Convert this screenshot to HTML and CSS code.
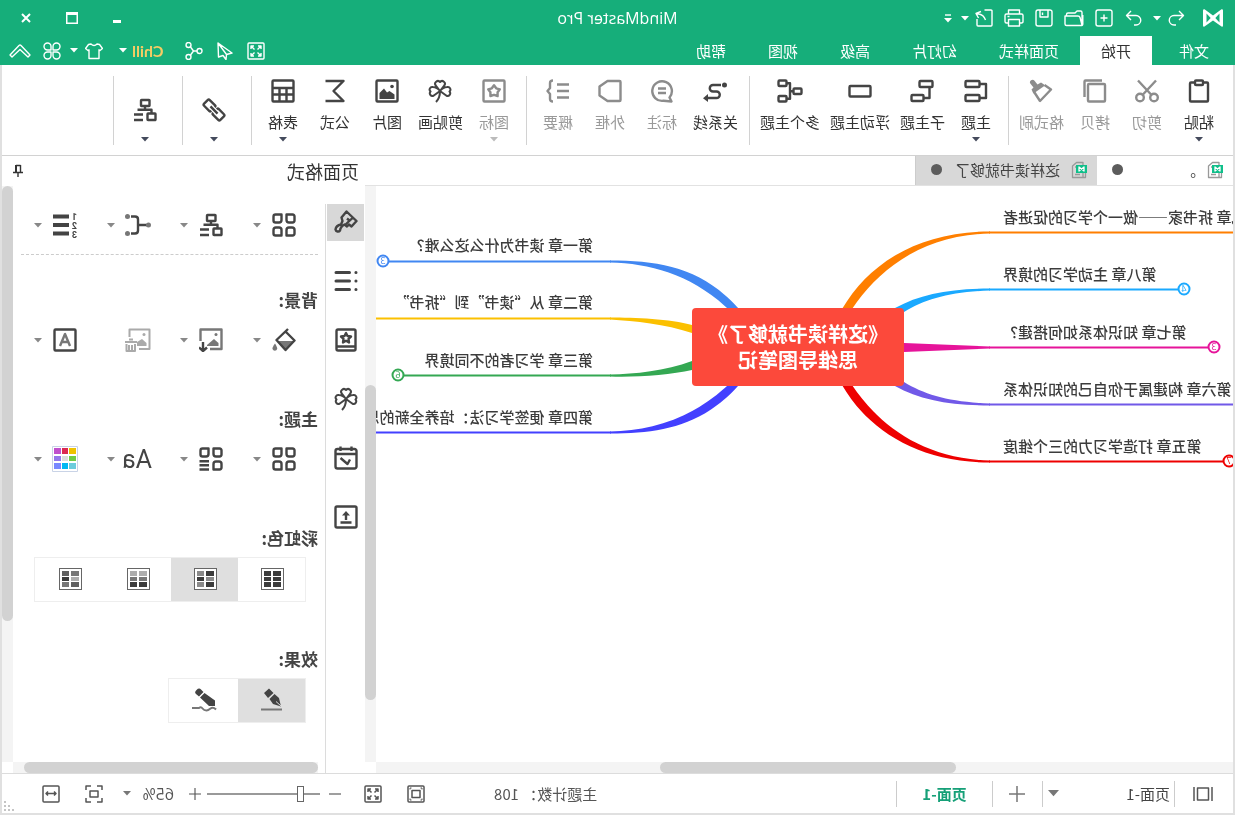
FILE: index.html
```html
<!DOCTYPE html>
<html lang="zh-CN">
<head>
<meta charset="utf-8">
<title>MindMaster Pro</title>
<link rel="stylesheet" href="styles.css">
</head>
<body>
<svg class="defs" aria-hidden="true">
  <symbol id="caret" viewBox="0 0 8 5"><path class="fill" d="M0 0h8L4 4.5z"/></symbol>
  <symbol id="logo" viewBox="0 0 20 18"><path class="fill" d="M0 1.500Q0 0 1.500.3L10 6.500 18.500.3Q20 0 20 1.500V16.500Q20 18 18.500 17.600L10 11.400 1.500 17.600Q0 18 0 16.500zM3.500 4.500V13.500L7.700 9zM16.500 4.500L12.300 9 16.500 13.500z" fill-rule="evenodd"/></symbol>
  <symbol id="undo" viewBox="0 0 18 18"><path d="M6 2L1.500 6.500 6 11M2 6.500H11a4.500 4.500 0 0 1 0 9.500H9"/></symbol>
  <symbol id="redo" viewBox="0 0 18 18"><path d="M12 2L16.500 6.500 12 11M16 6.500H7a4.500 4.500 0 0 0 0 9.500H9"/></symbol>
  <symbol id="new" viewBox="0 0 18 18"><rect x="1" y="1" width="16" height="16" rx="2"/><path d="M9 5.500v7M5.500 9h7"/></symbol>
  <symbol id="open" viewBox="0 0 20 18"><path d="M2 16V3.500Q2 2 3.500 2H7l2 2H16Q17.500 4 17.500 5.500V7M2 16L4 8.500Q4.500 7 6 7H19V15Q19 16.500 17.500 16.500H3Q1.200 16.500 1.200 15V6"/></symbol>
  <symbol id="save" viewBox="0 0 18 18"><rect x="1" y="1" width="16" height="16" rx="2"/><path d="M5 1v7h8V1M10.500 3.500v2.500"/></symbol>
  <symbol id="print" viewBox="0 0 20 18"><path d="M4.500 5V1H15.500V5M4.500 14H2.500Q1 14 1 12.500V6.500Q1 5 2.500 5H17.500Q19 5 19 6.500V12.500Q19 14 17.500 14H15.500M4.500 10.500H15.500V17H4.500zM14.500 7.500h2"/></symbol>
  <symbol id="export" viewBox="0 0 18 18"><path d="M8.500 1H2Q1 1 1 2V16Q1 17 2 17H15Q16 17 16 16V10M12 2.500L17 4.500 14.500 9M16.500 4.800C12 4.800 9 7 7.500 11"/></symbol>
  <symbol id="more" viewBox="0 0 8 9"><path d="M1 1h6"/><path class="fill" d="M0 4h8L4 8.500z"/></symbol>
  <symbol id="min" viewBox="0 0 8 12"><path class="fill" d="M0 8h8v3H0z"/></symbol>
  <symbol id="max" viewBox="0 0 12 12"><path class="fill" d="M0 0h12v12H0zM1.500 3v7.500h9V3z" fill-rule="evenodd"/></symbol>
  <symbol id="close" viewBox="0 0 10 10"><path d="M1 1l8 8M9 1L1 9"/></symbol>
  <symbol id="full" viewBox="0 0 18 18"><rect x="1" y="1" width="16" height="16" rx="1"/><path d="M4 7V4h3M4 4l3.500 3.500M14 7V4h-3M14 4l-3.500 3.500M4 11v3h3M4 14l3.500-3.500M14 11v3h-3M14 14l-3.500-3.500"/></symbol>
  <symbol id="plane" viewBox="0 0 18 18"><path d="M16 1L2 11 7.500 12.500 8 17.500 11 13.500 15.500 15zM16 1L7.500 12.500"/></symbol>
  <symbol id="share" viewBox="0 0 18 18"><circle cx="3.500" cy="9" r="2.500"/><circle cx="14.500" cy="3" r="2.500"/><circle cx="14.500" cy="15" r="2.500"/><path d="M6 9h3.500M9.500 9L12.500 5M9.500 9l3 4"/></symbol>
  <symbol id="shirt" viewBox="0 0 18 18"><path d="M6 2Q9 5 12 2L14.500 2.500 17.500 6.500 15 8.500 14 7.800V16.500H4V7.800L3 8.500.5 6.500 3.500 2.500z"/></symbol>
  <symbol id="petals" viewBox="0 0 18 18"><path d="M8 8H4.500A3.500 3.500 0 1 1 8 4.500zM10 8V4.500A3.500 3.500 0 1 1 13.500 8zM8 10V13.500A3.500 3.500 0 1 1 4.500 10zM10 10H13.500A3.500 3.500 0 1 1 10 13.500z"/></symbol>
  <symbol id="up" viewBox="0 0 22 16"><path d="M1 12L10 2.500Q11 1.500 12 2.500L21 12 19 14 11 6.500 3 14z"/></symbol>

  <symbol id="paste" viewBox="0 0 24 24"><path d="M8 3.500H4Q3 3.500 3 4.500V21.500Q3 22.500 4 22.500H20Q21 22.500 21 21.500V4.500Q21 3.500 20 3.500H16"/><rect x="8" y="1.500" width="8" height="4.500" rx="1"/></symbol>
  <symbol id="cut" viewBox="0 0 24 24"><path d="M3 1.500L17 16.500M21 1.500L7 16.500"/><circle cx="5" cy="18.500" r="3.800"/><circle cx="19" cy="18.500" r="3.800"/></symbol>
  <symbol id="copy" viewBox="0 0 24 24"><rect x="2" y="5" width="17" height="17.500" rx="1"/><path d="M5 1.500H21.500Q22.500 1.500 22.500 2.500V18"/></symbol>
  <symbol id="brush" viewBox="0 0 24 24"><path d="M8.500 6L2 10.500 13 22 19.500 12"/><path class="fill" d="M9 5.500L12 3.500 15.500 5.500 18.500 1.800a2.400 2.400 0 0 1 4 3L19.500 8.500 21.500 10.500 19.500 14.500 8 6.500z"/></symbol>
  <symbol id="topic" viewBox="0 0 24 24"><rect x="8.500" y="2" width="14" height="6" rx="1"/><rect x="8.500" y="16" width="14" height="6" rx="1"/><path d="M8.500 5H2V19H8.500"/></symbol>
  <symbol id="subtopic" viewBox="0 0 24 24"><rect x="1.500" y="2" width="13" height="6" rx="1"/><rect x="10.500" y="16" width="12" height="6" rx="1"/><path d="M4.500 8V19H10.500"/></symbol>
  <symbol id="float" viewBox="0 0 24 24"><rect x="1.500" y="7" width="21" height="10.500" rx="1"/></symbol>
  <symbol id="multi" viewBox="0 0 26 24"><rect x="16.500" y="1.500" width="8" height="5.500" rx="1"/><rect x="16.500" y="17" width="8" height="5.500" rx="1"/><rect x="1.500" y="9.500" width="8" height="5.500" rx="1"/><path d="M9.500 12.200H13M16.500 4.200H13V19.800H16.500"/></symbol>
  <symbol id="relation" viewBox="0 0 24 24"><circle class="fill" cx="2.500" cy="6" r="2.500"/><path d="M6 6H14a3.200 3.200 0 0 1 0 6.500H10.500a3.200 3.200 0 0 0 0 6.500H20"/><path class="fill" d="M19 15L24 19.200 19 23z"/></symbol>
  <symbol id="callout" viewBox="0 0 24 24"><path d="M2.500 22.500L4.500 18.500A9.800 9.800 0 1 1 10.500 21.800zM8 9.500H16M8 14H16"/></symbol>
  <symbol id="outline" viewBox="0 0 24 24"><path d="M2.500 2H14.500L22.500 7.500V16.500L14.500 22H2.500Q1.500 22 1.500 21V3Q1.500 2 2.500 2z"/></symbol>
  <symbol id="summary" viewBox="0 0 24 24"><path d="M1 5.500H13M1 12H13M1 18.500H13M17 1.500Q20 1.500 20 4V9L22.500 12 20 15V20Q20 22.500 17 22.500"/></symbol>
  <symbol id="mark" viewBox="0 0 24 24"><rect x="1.500" y="1.500" width="21" height="21" rx="1"/><path d="M12 6.200L14.200 9.300 17.800 10.300 15.600 13.300 15.600 17 12 15.800 8.400 17 8.400 13.300 6.200 10.300 9.800 9.300z"/></symbol>
  <symbol id="clover" viewBox="0 0 24 24"><path d="M12 12L7.800 6.500A2.600 2.600 0 0 1 12 3 2.600 2.600 0 0 1 16.200 6.500zM12 12L5.500 16.800A2.700 2.700 0 0 1 2.500 12.500 2.600 2.600 0 0 1 4.800 8Q9 8 12 12M12 12L18.500 16.800A2.700 2.700 0 0 0 21.500 12.500 2.600 2.600 0 0 0 19.200 8Q15 8 12 12Q12 19 16 23" stroke-width="2"/></symbol>
  <symbol id="picture" viewBox="0 0 24 24"><rect x="1.500" y="1.500" width="21" height="21" rx="1"/><path class="fill" d="M4.500 20V15.500L9.500 12 12 13.500 15 9.500 19.500 14V20z"/><circle class="fill" cx="7" cy="7.500" r="1.800"/></symbol>
  <symbol id="sigma" viewBox="0 0 24 24"><path d="M21.500 2H3.500L13.500 12 3.500 22H21.500"/></symbol>
  <symbol id="table" viewBox="0 0 24 24"><rect x="1.500" y="1.500" width="21" height="21" rx="1"/><path d="M1.500 9H22.500M1.500 15.500H22.500M8.500 9V22M15.500 9V22"/></symbol>
  <symbol id="link" viewBox="0 0 24 24"><g transform="rotate(-45 12 12)"><path d="M10.500 9.500V9Q10.500 8 9.500 8H2Q.5 8 .5 9.500V14.500Q.5 16 2 16H9.500Q10.500 16 10.500 15V14.500M13.500 9.500V9Q13.500 8 14.500 8H22Q23.500 8 23.500 9.500V14.500Q23.500 16 22 16H14.500Q13.500 16 13.500 15V14.500M7 12H17"/></g></symbol>
  <symbol id="structure" viewBox="0 0 24 24"><rect x="7.500" y="2" width="8.500" height="6" rx=".5"/><path d="M12 8V11.500M5.500 15V11.800H19.500"/><rect x="1.500" y="15.500" width="8" height="6.500" rx=".5"/><path d="M14 16.500H23M14 22H23"/></symbol>

  <symbol id="doc" viewBox="0 0 16 18"><path class="doc-sheet" d="M4 1.500H10.500L14.500 5V16.500H4zM1.500 4.500V14M7 6H12M7 13.500H12M4 16.500H1.500V13"/><rect class="doc-badge" x="0" y="4" width="11" height="8"/><path class="doc-mark" d="M3 6V10L8 6V10z"/></symbol>
  <symbol id="pin" viewBox="0 0 12 14"><path d="M3.500 1V8M8 1V8M3.500 1.500H8M1 8.500H11M6 8.500V13"/><path class="fill" d="M7 1h2v7H7z"/></symbol>

  <symbol id="paint" viewBox="0 0 24 24"><path d="M11.500 1.500L1.500 11 6.500 16.500 9 14.500 11 16.500 13.500 14.500Q17.500 16.500 18 20.500A2.500 2.500 0 0 0 22.500 19.500Q22 15.500 17 14.500L15.500 11 16.500 7.500zM5 7.500L13.500 15.500M8 11L11 8.500"/></symbol>
  <symbol id="list" viewBox="0 0 24 24"><path class="thick" d="M8.500 3.500H22M8.500 12H22M8.500 20.500H22"/><path class="thick" d="M2 3.500h.1M2 12h.1M2 20.500h.1"/></symbol>
  <symbol id="book" viewBox="0 0 24 24"><rect x="2.500" y="1.500" width="19" height="21" rx="1.500"/><path d="M3 18.500H21M12 5L13.500 8 17 8.500 14.500 10.800 15 14.500 12 12.800 9 14.500 9.500 10.800 7 8.500 10.500 8z"/></symbol>
  <symbol id="calendar" viewBox="0 0 24 24"><rect x="1.500" y="3" width="21" height="19.500" rx="2"/><path d="M2 8H22M6.500 .5V5M17.500 .5V5M17.500 12L10.500 18 8 13.500"/></symbol>
  <symbol id="upload" viewBox="0 0 24 24"><rect x="1.500" y="1.500" width="21" height="21" rx="1.500"/><path d="M6.500 17.500H17.500M12 15V8"/><path class="fill" d="M8 10.500L12 6 16 10.500z"/></symbol>

  <symbol id="leaves" viewBox="0 0 24 24"><path d="M1.500 3.500Q1.500 1.500 3.500 1.500H9.500V7Q9.500 9.500 7 9.500H3.500Q1.500 9.500 1.500 7.500zM14.500 1.500H20.500Q22.500 1.500 22.500 3.500V7.500Q22.500 9.500 20.500 9.500H17Q14.500 9.500 14.500 7zM1.500 17Q1.500 14.500 4 14.500H7Q9.500 14.500 9.500 17V22.500H3.500Q1.500 22.500 1.500 20.500zM14.500 17Q14.500 14.500 17 14.500H20Q22.500 14.500 22.500 17V20.500Q22.500 22.500 20.500 22.500H14.500z"/></symbol>
  <symbol id="leaflist" viewBox="0 0 24 24"><path d="M1.500 3.500Q1.500 1.500 3.500 1.500H9.500V7Q9.500 9.500 7 9.500H3.500Q1.500 9.500 1.500 7.500zM14.500 1.500H20.500Q22.500 1.500 22.500 3.500V7.500Q22.500 9.500 20.500 9.500H17Q14.500 9.500 14.500 7zM1.500 17Q1.500 14.500 4 14.500H7Q9.500 14.500 9.500 17V22.500H3.500Q1.500 22.500 1.500 20.500zM14 14.200H23.500M14 18.300H23.500M14 22.500H23.500"/></symbol>
  <symbol id="bracket" viewBox="0 0 26 24"><path d="M3 12H13M20 3.500H16Q13 3.500 13 6.500V17.500Q13 20.500 16 20.500H20"/><g class="dim"><circle class="fill" cx="2.500" cy="12" r="2.500"/><circle class="fill" cx="23.500" cy="3.500" r="2.500"/><circle class="fill" cx="23.500" cy="20.500" r="2.500"/></g></symbol>
  <symbol id="bucket" viewBox="0 0 24 24"><path class="dim fill" d="M2.500 13H19L11 21.500z"/><path d="M8 1L19.500 12 10.500 22 1.500 12.500 10 4"/><path class="dim fill" d="M21 15.500Q24 19.500 23.500 21A2.500 2.500 0 0 1 18.800 21Q18.500 19.500 21 15.500z"/></symbol>
  <symbol id="imgdown" viewBox="0 0 24 24"><g class="dim"><path d="M13 21H1.500V1.500H22.500V13"/><path class="fill" d="M4.500 18V15L9 11 16 17V18z"/><circle class="fill" cx="7" cy="6.500" r="1.500"/></g><path d="M20 14V23M16 19.500L20 23 24 19.500"/></symbol>
  <symbol id="imgtrash" viewBox="0 0 26 24"><path d="M12 21H1.500V1.500H21.500V9"/><path class="fill" d="M4.500 18V15L9 11 14 14V18z"/><circle class="fill" cx="7" cy="6.500" r="1.500"/><path d="M14 14H26M18 11.500H22M16 16V23H24.500V16M19 17V23M22 17V23"/></symbol>
  <symbol id="letter" viewBox="0 0 24 24"><rect x="1.500" y="1.500" width="21" height="21" rx="1"/><path class="dim" d="M7 18L12 6 17 18M9 14H15"/></symbol>
  <symbol id="palette" viewBox="0 0 26 26"><rect x=".5" y=".5" width="25" height="25" fill="#fff" stroke="#c9d3e6" stroke-width="1"/><g stroke="none"><path fill="#eec200" d="M2 2h7v6H2z"/><path fill="#dc2850" d="M10 2h6v6h-6z"/><path fill="#c050cc" d="M17 2h7v6h-7z"/><path fill="#70cc44" d="M2 10h7v5H2z"/><path fill="#dcdcdc" d="M10 10h6v5h-6z"/><path fill="#9478ea" d="M17 10h7v5h-7z"/><path fill="#6cccdc" d="M2 17h7v6H2z"/><path fill="#00b8f2" d="M10 17h6v6h-6z"/><path fill="#7888ff" d="M17 17h7v6h-7z"/></g></symbol>
  <symbol id="pen" viewBox="0 0 24 24"><path class="fill" d="M15 .5L10.500 5 16 10 20 5zM9.500 6L14.500 11 11 16 3 18.500 5 10z"/><path d="M3 18L8 13.500" stroke="#ddd" stroke-width="1"/><path class="dim" d="M2 21.500H23"/></symbol>
  <symbol id="pencil" viewBox="0 0 26 24"><path class="fill" d="M16 1.500Q18-.5 20.500 2T21 6L18 8.500 13.500 4zM12.500 5L17 9.500 8 18 2 18V12.500z"/><path class="dim" d="M1 21.500Q4 18.500 6.500 20.500T10.500 22.500Q13 22.500 14.500 20.500T18 20H25"/></symbol>

  <symbol id="view" viewBox="0 0 20 14"><path d="M1 0V14M19 0V14"/><rect x="4.500" y="1" width="11" height="12"/></symbol>
  <symbol id="plus" viewBox="0 0 16 16"><path d="M8 0V16M0 8H16"/></symbol>
  <symbol id="minus" viewBox="0 0 16 16"><path d="M0 8H16"/></symbol>
  <symbol id="fitcanvas" viewBox="0 0 18 18"><rect x="1" y="1" width="16" height="16" rx="1"/><rect x="5" y="5.500" width="8" height="7"/><path d="M3 4.500V3h1.500M15 4.500V3h-1.500M3 13.500V15h1.500M15 13.500V15h-1.500" stroke-width="1"/></symbol>
  <symbol id="fitpage" viewBox="0 0 18 18"><path d="M1 5V1H6M12 1H17V5M17 13V17H12M6 17H1V13"/><rect x="5" y="6" width="8" height="6"/></symbol>
  <symbol id="fitwidth" viewBox="0 0 18 18"><rect x="1" y="1" width="16" height="16" rx="1"/><path d="M4 8.500H14M6 6.500L4 8.500 6 10.500M12 6.500L14 8.500 12 10.500"/></symbol>
  <symbol id="grip" viewBox="0 0 10 10"><path class="fill" d="M8 0h2v2H8zM4 4h2v2H4zM8 4h2v2H8zM0 8h2v2H0zM4 8h2v2H4zM8 8h2v2H8z"/></symbol>
</svg>

<div class="window">
  <header class="header">
    <div class="titlebar">
      <div class="quick">
        <svg class="logo"><use href="#logo"/></svg>
        <button class="quick-btn" aria-label="撤销"><svg class="ic18"><use href="#undo"/></svg></button>
        <svg class="caret"><use href="#caret"/></svg>
        <button class="quick-btn redo" aria-label="重做"><svg class="ic18"><use href="#redo"/></svg></button>
        <button class="quick-btn" aria-label="新建"><svg class="ic18"><use href="#new"/></svg></button>
        <button class="quick-btn" aria-label="打开"><svg class="ic20"><use href="#open"/></svg></button>
        <button class="quick-btn" aria-label="保存"><svg class="ic18"><use href="#save"/></svg></button>
        <button class="quick-btn" aria-label="打印"><svg class="ic20"><use href="#print"/></svg></button>
        <button class="quick-btn" aria-label="导出"><svg class="ic18"><use href="#export"/></svg></button>
        <svg class="caret"><use href="#caret"/></svg>
        <button class="quick-more" aria-label="更多"><svg><use href="#more"/></svg></button>
      </div>
      <h1 class="app-title">MindMaster Pro</h1>
      <div class="controls">
        <button aria-label="最小化"><svg class="win-min"><use href="#min"/></svg></button>
        <button aria-label="最大化"><svg class="win-max"><use href="#max"/></svg></button>
        <button aria-label="关闭"><svg class="win-close"><use href="#close"/></svg></button>
      </div>
    </div>
    <div class="menubar">
      <nav class="menu">
        <button class="menu-file">文件</button>
        <button class="active">开始</button>
        <button>页面样式</button>
        <button>幻灯片</button>
        <button>高级</button>
        <button>视图</button>
        <button>帮助</button>
      </nav>
      <div class="tools">
        <button class="tool" aria-label="全屏"><svg class="ic18"><use href="#full"/></svg></button>
        <button class="tool" aria-label="发送"><svg class="ic18"><use href="#plane"/></svg></button>
        <button class="tool" aria-label="分享"><svg class="ic18"><use href="#share"/></svg></button>
        <button class="user">Chill <svg class="caret"><use href="#caret"/></svg></button>
        <button class="skin" aria-label="皮肤"><svg class="ic18"><use href="#shirt"/></svg><svg class="caret"><use href="#caret"/></svg></button>
        <button aria-label="应用"><svg class="ic18"><use href="#petals"/></svg></button>
        <button aria-label="收起"><svg class="chevron"><use href="#up"/></svg></button>
      </div>
    </div>
  </header>

  <div class="frame">
    <section class="ribbon">
      <div class="group">
        <button class="item"><svg class="ic24"><use href="#paste"/></svg><span>粘贴</span><svg class="caret"><use href="#caret"/></svg></button>
        <button class="item off"><svg class="ic24"><use href="#cut"/></svg><span>剪切</span></button>
        <button class="item off"><svg class="ic24"><use href="#copy"/></svg><span>拷贝</span></button>
        <button class="item off"><svg class="ic24"><use href="#brush"/></svg><span>格式刷</span></button>
      </div>
      <div class="group">
        <button class="item"><svg class="ic24"><use href="#topic"/></svg><span>主题</span><svg class="caret"><use href="#caret"/></svg></button>
        <button class="item"><svg class="ic24"><use href="#subtopic"/></svg><span>子主题</span></button>
        <button class="item"><svg class="ic24"><use href="#float"/></svg><span>浮动主题</span></button>
        <button class="item"><svg class="ic26"><use href="#multi"/></svg><span>多个主题</span></button>
      </div>
      <div class="group">
        <button class="item"><svg class="ic24"><use href="#relation"/></svg><span>关系线</span></button>
        <button class="item off"><svg class="ic24"><use href="#callout"/></svg><span>标注</span></button>
        <button class="item off"><svg class="ic24"><use href="#outline"/></svg><span>外框</span></button>
        <button class="item off"><svg class="ic24"><use href="#summary"/></svg><span>概要</span></button>
      </div>
      <div class="group">
        <button class="item off"><svg class="ic24"><use href="#mark"/></svg><span>图标</span><svg class="caret"><use href="#caret"/></svg></button>
        <button class="item"><svg class="ic24"><use href="#clover"/></svg><span>剪贴画</span></button>
        <button class="item"><svg class="ic24"><use href="#picture"/></svg><span>图片</span></button>
        <button class="item"><svg class="ic24"><use href="#sigma"/></svg><span>公式</span></button>
        <button class="item"><svg class="ic24"><use href="#table"/></svg><span>表格</span><svg class="caret"><use href="#caret"/></svg></button>
      </div>
      <div class="group">
        <button class="item solo" aria-label="链接"><svg class="ic24"><use href="#link"/></svg><svg class="caret"><use href="#caret"/></svg></button>
      </div>
      <div class="group">
        <button class="item solo" aria-label="布局"><svg class="ic24"><use href="#structure"/></svg><svg class="caret"><use href="#caret"/></svg></button>
      </div>
    </section>

    <main class="main">
      <section class="workspace">
        <div class="docs">
          <button class="doc"><svg class="doc-icon"><use href="#doc"/></svg><span>。</span><i class="dot"></i></button>
          <button class="doc active"><svg class="doc-icon"><use href="#doc"/></svg><span>这样读书就够了</span><i class="dot"></i></button>
        </div>
        <div class="canvas">
          <svg class="branches" viewBox="2 186 857 576">
            <g fill="#ff7f00" stroke="#ff7f00"><path stroke="none" d="M245 231.500C317 231.500 367 264 393 309L383 309C357 270 313 235 245 233.500z"/><path d="M0 232.500H246"/></g>
            <g fill="#1aa9ff" stroke="#1aa9ff"><path stroke="none" d="M245 288.500C285 288.500 315 294 340 308L331 312C310 299 285 292 245 290.500z"/><path d="M57 289.500H246"/></g>
            <g fill="#e6149a" stroke="#e6149a"><path stroke="none" d="M331 343L245 346.500V348.500L331 352z"/><path d="M27 347.500H246"/></g>
            <g fill="#7159e8" stroke="#7159e8"><path stroke="none" d="M245 405.500C285 405.500 315 400 340 386L331 382C310 395 285 402 245 403.500z"/><path d="M0 404.500H246"/></g>
            <g fill="#ee0000" stroke="#ee0000"><path stroke="none" d="M245 462.500C317 462.500 367 430 393 385L383 385C357 424 313 459 245 460.500z"/><path d="M12 461.500H246"/></g>
            <g fill="#4187f2" stroke="#4187f2"><path stroke="none" d="M625 260.500C575 260.500 533 268 497 308L508 308C545 274 585 263.500 625 262.500z"/><path d="M624 261.500H846"/></g>
            <g fill="#fbc000" stroke="#fbc000"><path stroke="none" d="M625 317.500C600 317.500 565 319 543 325V333C570 324 600 321 625 319.500z"/><path d="M624 318.500H860"/></g>
            <g fill="#34a853" stroke="#34a853"><path stroke="none" d="M625 376.500C600 377.500 565 375 543 370V361C570 371 600 374 625 374.500z"/><path d="M624 375.500H831"/></g>
            <g fill="#4340ff" stroke="#4340ff"><path stroke="none" d="M625 433.500C575 433.500 533 426 497 386L508 386C545 420 585 430.500 625 431.500z"/><path d="M624 432.500H860"/></g>
            <g class="count" stroke="#1aa9ff"><circle cx="51" cy="289" r="5.500"/><text x="51" y="292" fill="#1aa9ff">4</text></g>
            <g class="count" stroke="#e6149a"><circle cx="21" cy="347" r="5.500"/><text x="21" y="350" fill="#e6149a">3</text></g>
            <g class="count" stroke="#ee0000"><circle cx="6" cy="461" r="5.500"/><text x="6" y="464" fill="#ee0000">7</text></g>
            <g class="count" stroke="#4187f2"><circle cx="852" cy="261" r="5.500"/><text x="852" y="264" fill="#4187f2">3</text></g>
            <g class="count" stroke="#34a853"><circle cx="837" cy="375" r="5.500"/><text x="837" y="378" fill="#34a853">6</text></g>
          </svg>
          <div class="root">《这样读书就够了》<br>思维导图笔记</div>
          <div class="node before n9">第九章 拆书家——做一个学习的促进者</div>
          <div class="node before n8">第八章 主动学习的境界</div>
          <div class="node before n7">第七章 知识体系如何搭建？</div>
          <div class="node before n6">第六章 构建属于你自己的知识体系</div>
          <div class="node before n5">第五章 打造学习力的三个维度</div>
          <div class="node after n1">第一章 读书为什么这么难？</div>
          <div class="node after n2">第二章 从“读书”到“拆书”</div>
          <div class="node after n3">第三章 学习者的不同境界</div>
          <div class="node after n4">第四章 便签学习法：培养全新的思维</div>
        </div>
        <div class="track-y"><i class="thumb canvas-thumb-y"></i></div>
        <div class="track-x"><i class="thumb canvas-thumb-x"></i></div>
      </section>

      <aside class="panel">
        <div class="panel-head"><h2>页面格式</h2><button aria-label="固定"><svg class="pin"><use href="#pin"/></svg></button></div>
        <nav class="rail">
          <button class="active" aria-label="页面格式"><svg class="ic24"><use href="#paint"/></svg></button>
          <button aria-label="大纲"><svg class="ic24"><use href="#list"/></svg></button>
          <button aria-label="图标"><svg class="ic24"><use href="#book"/></svg></button>
          <button aria-label="剪贴画"><svg class="ic24"><use href="#clover"/></svg></button>
          <button aria-label="任务"><svg class="ic24"><use href="#calendar"/></svg></button>
          <button aria-label="附件"><svg class="ic24"><use href="#upload"/></svg></button>
        </nav>
        <div class="settings">
          <div class="options">
            <button aria-label="样式"><svg class="ic24"><use href="#leaves"/></svg><svg class="caret"><use href="#caret"/></svg></button>
            <button aria-label="结构"><svg class="ic24"><use href="#structure"/></svg><svg class="caret"><use href="#caret"/></svg></button>
            <button aria-label="连线"><svg class="ic26"><use href="#bracket"/></svg><svg class="caret"><use href="#caret"/></svg></button>
            <button aria-label="编号"><svg class="ic24x26" viewBox="0 0 24 26"><path class="bar" d="M8 4.500H24M8 13H24M8 21.500H24"/><text x="0" y="8">1</text><text x="0" y="17">2</text><text x="0" y="26">3</text></svg><svg class="caret"><use href="#caret"/></svg></button>
          </div>
          <hr>
          <h3>背景:</h3>
          <div class="options">
            <button aria-label="填充"><svg class="ic24"><use href="#bucket"/></svg><svg class="caret"><use href="#caret"/></svg></button>
            <button aria-label="插入图片"><svg class="ic24"><use href="#imgdown"/></svg><svg class="caret"><use href="#caret"/></svg></button>
            <button aria-label="删除图片"><svg class="ic26 faded"><use href="#imgtrash"/></svg></button>
            <button aria-label="水印"><svg class="ic24"><use href="#letter"/></svg><svg class="caret"><use href="#caret"/></svg></button>
          </div>
          <h3 class="spaced">主题:</h3>
          <div class="options">
            <button aria-label="主题"><svg class="ic24"><use href="#leaves"/></svg><svg class="caret"><use href="#caret"/></svg></button>
            <button aria-label="主题列表"><svg class="ic24"><use href="#leaflist"/></svg><svg class="caret"><use href="#caret"/></svg></button>
            <button class="font-btn" aria-label="字体"><span>Aa</span><svg class="caret"><use href="#caret"/></svg></button>
            <button aria-label="配色"><svg class="ic26x26"><use href="#palette"/></svg><svg class="caret"><use href="#caret"/></svg></button>
          </div>
          <h3 class="spaced">彩虹色:</h3>
          <div class="segment">
            <button aria-label="单色"><span class="swatch"><i class="d"></i><i class="d"></i><i class="d"></i><i class="d"></i><i class="d"></i><i class="d"></i></span></button>
            <button class="active" aria-label="交错"><span class="swatch"><i class="d"></i><i class="m"></i><i class="m"></i><i class="d"></i><i class="d"></i><i class="m"></i></span></button>
            <button aria-label="渐变"><span class="swatch"><i class="l"></i><i class="l"></i><i class="g"></i><i class="g"></i><i class="d"></i><i class="d"></i></span></button>
            <button aria-label="混合"><span class="swatch"><i class="g"></i><i class="k"></i><i class="l"></i><i class="d"></i><i class="k"></i><i class="g"></i></span></button>
          </div>
          <h3 class="last">效果:</h3>
          <div class="segment">
            <button class="active" aria-label="直线"><svg class="ic24"><use href="#pen"/></svg></button>
            <button aria-label="手绘"><svg class="ic26"><use href="#pencil"/></svg></button>
          </div>
        </div>
        <div class="track-y"><i class="thumb panel-thumb-y"></i></div>
        <div class="track-x"><i class="thumb panel-thumb-x"></i></div>
      </aside>
    </main>

    <footer class="status">
      <button class="view" aria-label="视图"><svg><use href="#view"/></svg></button>
      <label class="page-pick"><select aria-label="页面"><option>页面-1</option></select><svg><use href="#caret"/></svg></label>
      <button class="page-add" aria-label="添加页面"><svg><use href="#plus"/></svg></button>
      <button class="page-tab">页面-1</button>
      <span class="total">主题计数： 108</span>
      <button class="fit-canvas" aria-label="适合画布"><svg class="ic18"><use href="#fitcanvas"/></svg></button>
      <button class="fit-full" aria-label="全屏"><svg class="ic18"><use href="#full"/></svg></button>
      <button class="zoom-btn" aria-label="缩小"><svg><use href="#minus"/></svg></button>
      <input class="zoom" type="range" min="0" max="100" value="15" aria-label="缩放">
      <button class="zoom-btn" aria-label="放大"><svg><use href="#plus"/></svg></button>
      <label class="percent"><select aria-label="缩放比例"><option>65%</option></select><svg class="caret"><use href="#caret"/></svg></label>
      <button class="fit-page" aria-label="适合页面"><svg class="ic18"><use href="#fitpage"/></svg></button>
      <button class="fit-width" aria-label="适合宽度"><svg class="ic18"><use href="#fitwidth"/></svg></button>
      <svg class="grip"><use href="#grip"/></svg>
    </footer>
  </div>
</div>
</body>
</html>
```
FILE: styles.css
```css
* { box-sizing: border-box; }
body {
  margin: 0;
  overflow: hidden;
  font-family: "Noto Sans CJK SC", "Open Sans", sans-serif;
  font-size: 15px;
  color: #333;
  background: #fff;
}
button, select {
  font: inherit;
  color: inherit;
  background: none;
  border: 0;
  padding: 0;
  margin: 0;
}
button { display: flex; align-items: center; justify-content: center; white-space: nowrap; }
h1, h2, h3 { margin: 0; font-weight: 400; }
svg { display: block; flex: none; fill: none; stroke: currentColor; stroke-width: 2; stroke-linejoin: round; }
.fill { fill: currentColor; stroke: none; }
.dim { color: #777; stroke: #777; }
.dim .fill, .dim.fill { fill: #777; stroke: none; }
.thick { stroke-width: 3; stroke-linecap: round; }
.bar { stroke-width: 4; }
.defs { position: absolute; width: 0; height: 0; }
.caret { width: 8px; height: 5px; }
.ic18 { width: 18px; height: 18px; }
.ic20 { width: 20px; height: 18px; }
.ic24 { width: 24px; height: 24px; }
.ic26 { width: 26px; height: 24px; }
.ic24x26 { width: 24px; height: 26px; }
.ic26x26 { width: 26px; height: 26px; }

/* The whole window is laid out left to right and shown mirrored. */
.window {
  display: flex;
  flex-direction: column;
  height: 100vh;
  transform: scaleX(-1);
}

.header { background: #16ae7a; color: #fff; }
.header svg { stroke-width: 1.4; }
.titlebar { display: grid; grid-template-columns: 1fr auto 1fr; align-items: center; height: 36px; }
.quick { display: flex; align-items: center; padding-left: 12px; }
.logo { width: 20px; height: 18px; margin-right: 12px; }
.quick-btn { width: 30px; height: 30px; }
.redo { margin-left: 4px; }
.quick-more { margin-left: 9px; }
.quick-more svg { width: 8px; height: 9px; }
.app-title { font-family: "Open Sans", sans-serif; font-size: 16px; }
.controls { display: flex; justify-content: flex-end; gap: 35px; padding-right: 21px; }
.win-min { width: 8px; height: 12px; }
.win-max { width: 12px; height: 12px; }
.header .win-close { width: 10px; height: 10px; stroke-width: 2; }
.menubar { display: flex; justify-content: space-between; height: 29px; }
.menu { display: flex; padding-left: 5px; }
.menu button { padding: 0 21px; }
.menu .menu-file { margin-right: 6px; }
.menu .active { background: #fff; color: #333; }
.tools { display: flex; align-items: center; padding-right: 9px; }
.tool { width: 31px; }
.user { gap: 5px; margin: 0 16px 0 15px; color: #f5cc64; font-family: Lato, sans-serif; font-size: 16px; font-weight: 700; }
.user .caret { color: #fff; }
.skin { gap: 7px; margin-right: 9px; }
.chevron { width: 22px; height: 16px; margin-left: 12px; }

.frame {
  display: flex;
  flex-direction: column;
  flex: 1;
  min-height: 0;
  border: solid #e0e0e0;
  border-width: 0 2px 2px;
}
.ribbon { display: flex; height: 91px; padding: 11px 0 9px 8px; border-bottom: 1px solid #d2d2d2; }
.ribbon svg, .rail svg, .options svg { stroke-width: 2.4; }
.group { display: flex; padding-right: 5px; margin-right: 6px; border-right: 1px solid #d2d2d2; margin-bottom: 1px; }
.item { flex-direction: column; justify-content: flex-start; min-width: 52px; padding: 3px 5px 0; color: #444; }
.item span { line-height: 22px; margin-top: 8px; color: #333; }
.item .caret { margin-top: 4px; color: #444a5c; }
.item.off { color: #8c8c8c; }
.item.off span { color: #999; }
.item.off .caret { color: #bbb; }
.item.solo { min-width: 57px; padding: 22px 0 0 4px; }
.item.solo .caret { margin-top: 15px; }

.main { display: flex; flex: 1; min-height: 0; }
.workspace {
  display: grid;
  grid-template: 30px 1fr 11px / 1fr 11px;
  flex: 1;
  min-width: 0;
}
.docs { grid-column: 1 / 3; display: flex; border-bottom: 1px solid #e2e2e2; }
.doc { width: 136px; justify-content: flex-start; gap: 11px; padding: 0 15px 2px 10px; color: #444; }
.doc.active { width: auto; background: #d8d8d8; border-right: 1px solid #ccc; }
.doc-icon { width: 16px; height: 18px; }
.doc-sheet { stroke: #999; stroke-width: 1.3; }
.doc-badge { fill: #0fbf8a; stroke: none; }
.doc-mark { stroke: #fff; stroke-width: 1.3; }
.dot { width: 11px; height: 11px; margin-left: auto; border-radius: 50%; background: #5c5c5c; }
.doc.active .dot { margin-left: 2px; }

.canvas { position: relative; overflow: hidden; }
.branches { position: absolute; left: 0; top: 0; width: 857px; height: 576px; }
.count circle { fill: #fff; }
.count text { stroke: none; font: 9px "Open Sans", sans-serif; text-anchor: middle; }
.root {
  position: absolute;
  left: 329px;
  top: 122px;
  width: 212px;
  padding: 13px 0;
  border-radius: 4px;
  background: #fc493b;
  color: #fff;
  font-size: 20px;
  font-weight: 700;
  line-height: 26px;
  text-align: center;
}
.node { position: absolute; line-height: 22px; font-weight: 500; color: #3c3c3c; white-space: nowrap; }
.before { right: 627px; }
.after { left: 640px; }
.n9 { top: 20px; }
.n8 { top: 77px; }
.n7 { top: 135px; }
.n6 { top: 192px; }
.n5 { top: 249px; }
.n1 { top: 48px; }
.n2 { top: 105px; }
.n3 { top: 163px; }
.n4 { top: 220px; }

.track-y, .track-x { display: flex; background: #f4f4f4; }
.track-y { flex-direction: column; }
.thumb { border-radius: 6px; background: #d2d2d2; }
.canvas-thumb-y { height: 315px; margin-top: 199px; }
.canvas-thumb-x { width: 296px; margin-left: 277px; }

.panel {
  display: grid;
  grid-template: 30px 1fr 11px / 40px minmax(0, 1fr) 11px;
  width: 363px;
}
.panel-head { grid-column: 1 / 4; display: flex; align-items: center; justify-content: space-between; padding: 0 10px 0 6px; }
.panel-head h2 { font-size: 18px; }
.pin { width: 12px; height: 14px; stroke-width: 1.4; }
.rail { grid-row: 2 / 4; display: flex; flex-direction: column; gap: 22px; margin-top: 18px; border-right: 1px solid #dcdcdc; padding-left: 1px; color: #444; }
.rail button { width: 37px; height: 37px; padding: 0 1px 1px 0; }
.rail .active { background: #d8d8d8; }
.settings { padding: 24px 8px 0 7px; color: #444; }
.options { display: flex; height: 30px; padding-left: 22px; }
.options button { flex: none; gap: 11px; width: 73px; justify-content: flex-start; }
.options button:last-child { width: 45px; }
.options .ic26, .options .ic26x26 { margin: 0 -1px; }
.options .caret { color: #888; }
.options .faded { color: #aaa; stroke: #aaa; stroke-width: 2; }
.options text { font: 700 9px Roboto, sans-serif; fill: currentColor; stroke: none; }
.font-btn span { width: 29px; margin: 0 -3px 0 -2px; font: 400 25px Roboto, sans-serif; }
hr { margin: 14px 0 33px; border: 0; border-top: 1px dashed #ccc; }
h3 { margin-bottom: 13px; font-size: 17px; line-height: 24px; font-weight: 700; }
.spaced { margin-top: 52px; }
.settings h3:has(+ .segment) { margin-bottom: 7px; }
.last { margin-top: 45px; }
.segment { display: flex; width: max-content; margin-left: 12px; border: 1px solid #eee; }
.segment button { width: 67px; height: 43px; padding: 0 2px 1px 0; }
.segment button + button:last-child { width: 69px; padding-right: 2px; }
.segment .active { background: #dfdfdf; }
.swatch { display: grid; grid-template-columns: 1fr 1fr; gap: 1px 2px; width: 23px; height: 22px; padding: 2px; border: 1px solid #666; background: #fff; }
.d { background: #3c3c3c; }
.m { background: #8a8a8a; }
.l { background: #adadad; }
.g { background: #777; }
.k { background: #606060; }
.panel-thumb-y { height: 435px; }
.panel-thumb-x { width: 294px; margin-left: 7px; }
.panel .track-x { background: linear-gradient(90deg, #fff 7px, #f4f4f4 7px); }

.status { position: relative; display: flex; align-items: center; height: 40px; padding: 0 40px 0 20px; border-top: 1px solid #dcdcdc; color: #555; }
.status > * { flex: none; }
.status svg { stroke-width: 1.5; }
.view { margin-right: 18px; }
.view svg { width: 20px; height: 14px; }
.page-pick, .page-add, .page-tab { display: flex; align-items: center; height: 26px; border-left: 1px solid #ccc; }
.page-pick { width: 132px; padding: 0 5px 0 4px; color: #444; }
.page-pick svg { width: 11px; height: 7px; color: #777; }
.page-pick select, .percent select { appearance: none; flex: 1; }
.page-add { width: 50px; color: #777; }
.page-add svg { width: 16px; height: 16px; }
.page-tab { width: 97px; border-right: 1px solid #ccc; color: #16a078; font-weight: 700; }
.total { margin-left: auto; margin-right: 69px; }
.fit-canvas { margin-right: 25px; }
.fit-full { margin-right: 23px; }
.zoom-btn svg { width: 12px; height: 12px; }
.zoom { appearance: none; width: 113px; height: 17px; margin: 0 6px 0 9px; background: linear-gradient(#999, #999) center / 100% 2px no-repeat; }
.zoom::-webkit-slider-thumb { appearance: none; width: 7px; height: 16px; border: 1px solid #666; background: #fff; }
.percent { display: flex; align-items: center; margin: 0 20px 0 15px; width: 51px; font-family: "Open Sans", sans-serif; font-size: 16px; }
.percent .caret { color: #777; }
.fit-page { margin-right: 25px; }
.grip { position: absolute; right: 2px; bottom: 2px; width: 10px; height: 10px; color: #c4c4c4; }
```
